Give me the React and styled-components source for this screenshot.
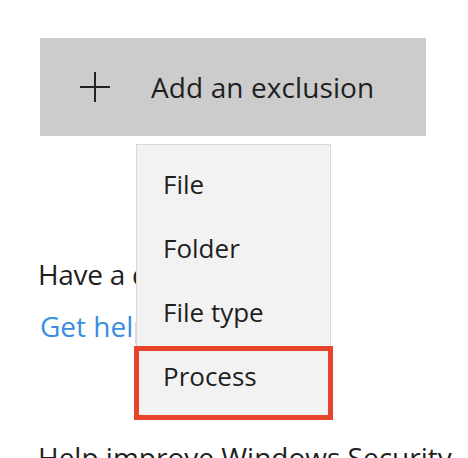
import React from "react"
import styled, { createGlobalStyle } from "styled-components"

const GlobalStyle = createGlobalStyle`
  html, body {
    margin: 0;
    padding: 0;
    background: #fff;
  }
  body {
    font-family: "Open Sans", "Noto Sans", "Liberation Sans", sans-serif;
    color: #1f1f1f;
    overflow: hidden;
  }
`

const Page = styled.div`
  width: 468px;
  height: 458px;
  padding: 38px 0 0 40px;
  box-sizing: border-box;
  overflow: hidden;
`

const ButtonWrap = styled.div`
  position: relative;
  width: 386px;
`

const AddButton = styled.div`
  display: flex;
  align-items: center;
  gap: 41px;
  height: 98px;
  padding-left: 40px;
  box-sizing: border-box;
  background: #cccccc;
  font-size: 28px;
  letter-spacing: 0.1px;
  color: #1f1f1f;
`

const PlusIcon = styled.svg`
  width: 30px;
  height: 30px;
  flex-shrink: 0;
`

const Menu = styled.div`
  position: absolute;
  top: 106px;
  left: 96px;
  width: 195px;
  box-sizing: border-box;
  padding: 7px 0 8px;
  background: #f2f2f2;
  border: 1px solid #d9d9d9;
  z-index: 2;
`

const MenuItem = styled.div`
  position: relative;
  display: flex;
  align-items: center;
  height: 64px;
  padding-left: 26px;
  font-size: 26px;
  color: #1f1f1f;

  ${props => props.marked && `
    &::after {
      content: "";
      position: absolute;
      top: 2px;
      left: -3px;
      right: -3px;
      bottom: -12px;
      border: 5px solid #e8432b;
    }
  `}
`

const Question = styled.p`
  margin: 112px 0 0 -2px;
  font-size: 28px;
  line-height: 52px;
  letter-spacing: -0.3px;
  white-space: nowrap;
`

const HelpLink = styled.a`
  display: block;
  font-size: 28px;
  line-height: 52px;
  color: #3a8ee0;
  text-decoration: none;
`

const Footer = styled.p`
  margin: 86px 0 0 -2px;
  font-size: 28px;
  line-height: 38px;
  white-space: nowrap;
`

const items = ["File", "Folder", "File type", "Process"]

export default function App() {
  return (
    <Page>
      <GlobalStyle />
      <ButtonWrap>
        <AddButton>
          <PlusIcon viewBox="0 0 30 30">
            <path d="M15 0V30M0 15H30" stroke="#222" strokeWidth="2" fill="none" />
          </PlusIcon>
          Add an exclusion
        </AddButton>
        <Menu>
          {items.map(item => (
            <MenuItem key={item} marked={item === "Process"}>{item}</MenuItem>
          ))}
        </Menu>
      </ButtonWrap>
      <Question>Have a question?</Question>
      <HelpLink href="#">Get help</HelpLink>
      <Footer>Help improve Windows Security</Footer>
    </Page>
  )
}
